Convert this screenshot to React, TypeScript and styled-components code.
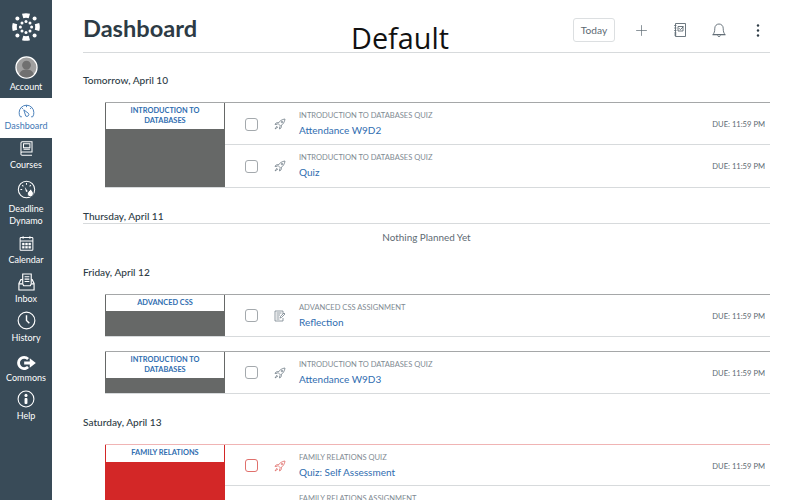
import React from 'react';
import styled, { createGlobalStyle } from 'styled-components';
import { Plus } from 'lucide-react';

const Global = createGlobalStyle`
  html, body {
    margin: 0;
    height: 500px;
    overflow: hidden;
    background: #fff;
    font-family: Lato, "Open Sans", sans-serif;
  }
`;

const Page = styled.div`
  display: flex;
  width: 800px;
  height: 500px;
  overflow: hidden;
  position: relative;
`;

const Nav = styled.nav`
  flex: 0 0 52px;
  width: 52px;
  height: 500px;
  background: #394b58;
  display: flex;
  flex-direction: column;
  align-items: center;
`;

const Logo = styled.div`
  height: 54px;
  display: flex;
  align-items: center;
  justify-content: center;
`;

const NavItem = styled.div<{ $active?: boolean; $height: number; $pad?: number; $gap?: number }>`
  width: 52px;
  height: ${(p) => p.$height}px;
  display: flex;
  flex-direction: column;
  align-items: center;
  justify-content: flex-end;
  padding-bottom: ${(p) => p.$pad ?? 6}px;
  box-sizing: border-box;
  background: ${(p) => (p.$active ? '#fff' : 'transparent')};
  color: ${(p) => (p.$active ? '#3f78b5' : '#fff')};
  font-size: 9px;
  line-height: 12px;
  text-align: center;
  svg { display: block; margin-bottom: ${(p) => p.$gap ?? 2}px; }
`;

const Main = styled.main`
  flex: 1;
  padding: 0 30px 0 31px;
  min-width: 0;
`;

const Header = styled.header`
  height: 52px;
  border-bottom: 1px solid #d7dadc;
  display: flex;
  align-items: center;
  justify-content: space-between;
`;

const Title = styled.h1`
  margin: 4px 0 0;
  font-size: 23.6px;
  font-weight: 700;
  color: #2d3b45;
`;

const Tools = styled.div`
  display: flex;
  align-items: center;
  margin-top: 8px;
  color: #5d6a73;
`;

const TodayButton = styled.div`
  width: 40px;
  height: 22px;
  border: 1px solid #dcdfe1;
  border-radius: 3px;
  font-size: 10.2px;
  line-height: 22px;
  text-align: center;
  color: #5d6a73;
  margin-right: 17px;
`;

const ToolIcon = styled.div<{ $dark?: boolean }>`
  width: 18px;
  display: flex;
  justify-content: center;
  margin-right: 21px;
  color: ${(p) => (p.$dark ? '#2d3b45' : 'inherit')};
  &:last-child { margin-right: 3px; }
`;

const Watermark = styled.div`
  position: absolute;
  left: 351px;
  top: 17px;
  font-family: "Open Sans", sans-serif;
  font-size: 28.8px;
  line-height: 42px;
  color: #111;
`;

const DayTitle = styled.h2<{ $top: number; $bordered?: boolean }>`
  margin: ${(p) => p.$top}px 0 0;
  font-size: 10.1px;
  font-weight: 500;
  line-height: 14px;
  color: #2d3b45;
  ${(p) => (p.$bordered ? 'border-bottom: 1px solid #d7dadc;' : '')}
`;

const Nothing = styled.div`
  text-align: center;
  font-size: 9.9px;
  line-height: 14px;
  margin-top: 6px;
  color: #5d6a73;
`;

const Group = styled.section<{ $top: number; $accent?: string }>`
  margin: ${(p) => p.$top}px 0 0 22px;
  display: flex;
  border-top: 1px solid ${(p) => p.$accent || '#a5a7a8'};
  border-bottom: 1px solid #d7dadc;
`;

const Course = styled.div<{ $color: string }>`
  flex: 0 0 118px;
  display: flex;
  flex-direction: column;
  border-left: 1px solid ${(p) => p.$color};
  border-right: 1px solid ${(p) => p.$color};
  border-bottom: 1px solid ${(p) => p.$color};
  background: ${(p) => p.$color};
`;

const CourseName = styled.div<{ $height: number; $color: string }>`
  height: ${(p) => p.$height}px;
  box-sizing: border-box;
  padding: 3px 18px 0;
  background: #fff;
  border-bottom: 1px solid ${(p) => p.$color};
  color: #2f6db0;
  font-size: 7.4px;
  font-weight: 700;
  line-height: 9.5px;
  text-align: center;
  text-transform: uppercase;
`;

const Rows = styled.div`
  flex: 1;
  min-width: 0;
`;

const Row = styled.div<{ $height: number }>`
  height: ${(p) => p.$height}px;
  display: flex;
  align-items: center;
  padding: 0 5px 0 20px;
  box-sizing: border-box;
  & + & { box-shadow: 0 -1px 0 #d7dadc; }
`;

const Check = styled.div<{ $accent?: string }>`
  width: 11px;
  height: 11px;
  border: 1px solid ${(p) => p.$accent || '#a4a9ad'};
  border-radius: 3px;
  margin-right: 16px;
  flex: none;
`;

const TypeIcon = styled.div<{ $color?: string }>`
  width: 12px;
  height: 12px;
  margin-right: 13px;
  flex: none;
  color: ${(p) => p.$color || '#73808a'};
  svg { display: block; }
`;

const Info = styled.div`
  flex: 1;
`;

const Kind = styled.div`
  font-size: 7.55px;
  line-height: 12px;
  color: #7f8b93;
  text-transform: uppercase;
`;

const Name = styled.div`
  font-size: 10px;
  line-height: 16px;
  color: #2f6db0;
`;

const Due = styled.div`
  font-size: 7.6px;
  color: #5d6a73;
`;

function CanvasLogo() {
  return (
    <svg width="28" height="28" viewBox="0 0 28 28" fill="#fff">
      <path d="M10 .8a13.5 13.5 0 0 1 8 0l-1.300 4.400a9 9 0 0 0-5.400 0z" />
      <path d="M10 27.200a13.5 13.5 0 0 0 8 0l-1.300-4.400a9 9 0 0 1-5.400 0z" />
      <path d="M.8 10a13.5 13.5 0 0 0 0 8l4.400-1.300a9 9 0 0 1 0-5.400z" />
      <path d="M27.200 10a13.5 13.5 0 0 1 0 8l-4.400-1.300a9 9 0 0 0 0-5.400z" />
      <circle cx="14" cy="8.4" r="1.5" />
      <circle cx="14" cy="19.6" r="1.5" />
      <circle cx="8.4" cy="14" r="1.5" />
      <circle cx="19.6" cy="14" r="1.5" />
      <circle cx="10" cy="10" r="1.5" />
      <circle cx="18" cy="10" r="1.5" />
      <circle cx="10" cy="18" r="1.5" />
      <circle cx="18" cy="18" r="1.5" />
      <circle cx="5.4" cy="5.4" r="2" />
      <circle cx="22.6" cy="5.4" r="2" />
      <circle cx="5.4" cy="22.6" r="2" />
      <circle cx="22.6" cy="22.6" r="2" />
    </svg>
  );
}

function AccountIcon() {
  return (
    <svg width="23" height="23" viewBox="0 0 24 24">
      <circle cx="12" cy="12" r="11" fill="#a0a0a0" stroke="#fff" strokeWidth="1.3" />
      <circle cx="12" cy="9.5" r="4.6" fill="#707070" />
      <path d="M4.5 19c1.5-4 4.5-4.800 7.5-4.800s6 .8 7.5 4.800a10 10 0 0 1-15 0z" fill="#707070" />
    </svg>
  );
}

const stroke = { fill: 'none', stroke: 'currentColor', strokeWidth: 1.2 };

function DashboardIcon() {
  return (
    <svg width="17" height="14" viewBox="0 0 22 18" {...stroke}>
      <path d="M5 16.5H3A9.5 9.5 0 0 1 1.5 11a9.5 9.5 0 0 1 19 0 9.5 9.5 0 0 1-1.500 5.500h-2" />
      <path d="M11 1.5v2.500M4.5 4.5 6.300 6.300M17.5 4.5 15.700 6.300" />
      <path d="M7.5 7.5 13.5 12a2.500 2.500 0 0 1-3.500 3.500z" />
    </svg>
  );
}

function CoursesIcon() {
  return (
    <svg width="17" height="17" viewBox="0 0 20 20" {...stroke}>
      <path d="M3.5 16V3.5A1.5 1.5 0 0 1 5 2h11.500v12H5a1.500 1.500 0 0 0-1.500 2A1.500 1.500 0 0 0 5 18h11.500" />
      <path d="M6.5 4.5h7.500v4.500H6.500zM6.500 11h7.500" />
    </svg>
  );
}

function DynamoIcon() {
  return (
    <svg width="19" height="19" viewBox="0 0 22 22">
      <circle cx="11" cy="11" r="9.5" {...stroke} />
      <path d="M11 3.5v2M4 11h2M6 6l1.400 1.400M16 6l-1.400 1.400" {...stroke} />
      <path d="M9 8l3.500 5-2 1z" fill="#fff" />
      <path d="M16 10c.5 2 3 3.200 3 6a3.500 3.500 0 0 1-7 0c0-2.600 3-3.600 4-6z" fill="#fff" stroke="#394b58" />
    </svg>
  );
}

function CalendarIcon() {
  return (
    <svg width="17" height="17" viewBox="0 0 20 20" {...stroke}>
      <rect x="2.5" y="3" width="15" height="15" rx="1" />
      <path d="M2.5 7h15M6 1.5v3M14 1.5v3" />
      <path d="M5 9.5h2.400v2.400H5zM8.800 9.500h2.400v2.400H8.800zM12.600 9.500H15v2.400h-2.400zM5 13.200h2.400v2.400H5zM8.800 13.200h2.400v2.400H8.800zM12.600 13.200H15v2.400h-2.400z" fill="currentColor" strokeWidth="0.4" />
    </svg>
  );
}

function InboxIcon() {
  return (
    <svg width="19" height="18" viewBox="0 0 20 19" {...stroke}>
      <path d="M6 11V1h9v10" />
      <path d="M8 4h5M8 6.5h5M8 9h5" />
      <path d="M6 7H4L2 11v7h16v-7l-2-4h-1" />
      <path d="M2 11.5h4l1 2h7l1-2h3" />
    </svg>
  );
}

function HistoryIcon() {
  return (
    <svg width="19" height="19" viewBox="0 0 20 20" {...stroke}>
      <circle cx="10" cy="10" r="8.8" />
      <path d="M10 4.5V10l3 3" strokeWidth="1.5" />
    </svg>
  );
}

function CommonsIcon() {
  return (
    <svg width="19" height="14" viewBox="0 0 20 15">
      <path d="M7.5 0a7.5 7.5 0 1 0 5.200 12.900l-2-2.100A4.500 4.500 0 0 1 7.500 12a4.500 4.500 0 0 1 0-9c1.200 0 2.300.5 3.200 1.200l2-2.100A7.500 7.500 0 0 0 7.500 0z" fill="#fff" />
      <path d="M7.5 6h6V2.500L20 7.500l-6.500 5V9h-6z" fill="#fff" />
    </svg>
  );
}

function HelpIcon() {
  return (
    <svg width="18" height="18" viewBox="0 0 20 20">
      <circle cx="10" cy="10" r="8.8" {...stroke} />
      <circle cx="10" cy="6" r="1.7" fill="#fff" />
      <rect x="8.4" y="9" width="3.2" height="6.5" rx="1" fill="#fff" />
    </svg>
  );
}

function Rocket() {
  return (
    <svg width="12" height="12" viewBox="0 0 12 12" fill="none" stroke="currentColor" strokeWidth="0.8">
      <path d="M4 5.5C5.5 3 8 1.300 11 1c-.3 3-2 5.500-4.500 7L4 5.500z" />
      <circle cx="8" cy="4" r="0.8" />
      <path d="M4.5 4.5 2 5 1 6.500l2.500-.2M7.500 7.500 7 10l-1.500 1 .2-2.500M3 8 1 11l3-2" />
    </svg>
  );
}

function AssignmentIcon() {
  return (
    <svg width="12" height="12" viewBox="0 0 12 12" fill="none" stroke="currentColor" strokeWidth="0.8">
      <path d="M9 4V1H1v10h8V8" />
      <path d="M2.5 3h5M2.5 5h3.500M2.500 7h2.500M2.500 9h3" />
      <path d="M6 8l.4-1.500L10 3l1 1-3.500 3.500z" />
    </svg>
  );
}

function PlannerIcon() {
  return (
    <svg width="12" height="14" viewBox="0 0 12 14" fill="none" stroke="currentColor" strokeWidth="0.9">
      <path d="M1.5.5h10v13h-10z" />
      <path d="M0 2.500h2.500M0 5h2.500M0 7.500h2.500M0 10h2.500M0 12h2.500" strokeWidth="0.7" />
      <path d="M4 3.500h5V8H4z" />
      <path d="M5 5.200l1.400 1.400L9.500 3.500" />
    </svg>
  );
}

function BellIcon() {
  return (
    <svg width="14" height="15" viewBox="0 0 14 15" fill="none" stroke="currentColor" strokeWidth="0.9">
      <path d="M7 1a4.200 4.200 0 0 0-4.200 4.200c0 3.300-.6 4.800-1.800 6.300h12c-1.200-1.500-1.800-3-1.800-6.300A4.200 4.200 0 0 0 7 1z" />
      <path d="M.5 11.800h13" />
      <path d="M5.500 12.500a1.600 1.600 0 0 0 3 0" />
    </svg>
  );
}

function DotsIcon() {
  return (
    <svg width="4" height="13" viewBox="0 0 4 13" fill="currentColor">
      <circle cx="2" cy="1.5" r="1.2" />
      <circle cx="2" cy="6.5" r="1.2" />
      <circle cx="2" cy="11.5" r="1.2" />
    </svg>
  );
}

interface Item { kind: string; name: string; icon: 'quiz' | 'assignment' }

function Plan(props: { top: number; course: string; color: string; head: number; items: Item[]; accent?: string; tint?: string; rowHeight?: number }) {
  return (
    <Group $top={props.top} $accent={props.accent}>
      <Course $color={props.color}>
        <CourseName $height={props.head} $color={props.color}>{props.course}</CourseName>
      </Course>
      <Rows>
        {props.items.map((item) => (
          <Row key={item.name} $height={props.rowHeight || 42}>
            <Check $accent={props.tint} />
            <TypeIcon $color={props.tint}>{item.icon === 'quiz' ? <Rocket /> : <AssignmentIcon />}</TypeIcon>
            <Info>
              <Kind>{item.kind}</Kind>
              <Name>{item.name}</Name>
            </Info>
            <Due>DUE: 11:59 PM</Due>
          </Row>
        ))}
      </Rows>
    </Group>
  );
}

const DB = 'Introduction to Databases';
const GREY = '#666867';
const RED = '#d32727';

export default function App() {
  return (
    <Page>
      <Global />
      <Nav>
        <Logo><CanvasLogo /></Logo>
        <NavItem $height={44} $pad={5}><AccountIcon />Account</NavItem>
        <NavItem $height={40} $active><DashboardIcon />Dashboard</NavItem>
        <NavItem $height={39}><CoursesIcon />Courses</NavItem>
        <NavItem $height={56} $gap={4}><DynamoIcon />Deadline Dynamo</NavItem>
        <NavItem $height={39}><CalendarIcon />Calendar</NavItem>
        <NavItem $height={39}><InboxIcon />Inbox</NavItem>
        <NavItem $height={39}><HistoryIcon />History</NavItem>
        <NavItem $height={40}><CommonsIcon />Commons</NavItem>
        <NavItem $height={38}><HelpIcon />Help</NavItem>
      </Nav>
      <Main>
        <Header>
          <Title>Dashboard</Title>
          <Tools>
            <TodayButton>Today</TodayButton>
            <ToolIcon><Plus size={17} strokeWidth={1} /></ToolIcon>
            <ToolIcon><PlannerIcon /></ToolIcon>
            <ToolIcon><BellIcon /></ToolIcon>
            <ToolIcon $dark><DotsIcon /></ToolIcon>
          </Tools>
        </Header>
        <DayTitle $top={20}>Tomorrow, April 10</DayTitle>
        <Plan top={15} course={DB} color={GREY} head={27} items={[
          { kind: 'Introduction to Databases Quiz', name: 'Attendance W9D2', icon: 'quiz' },
          { kind: 'Introduction to Databases Quiz', name: 'Quiz', icon: 'quiz' },
        ]} />
        <DayTitle $top={21} $bordered>Thursday, April 11</DayTitle>
        <Nothing>Nothing Planned Yet</Nothing>
        <DayTitle $top={21}>Friday, April 12</DayTitle>
        <Plan top={15} course="Advanced CSS" color={GREY} head={17} rowHeight={41} items={[
          { kind: 'Advanced CSS Assignment', name: 'Reflection', icon: 'assignment' },
        ]} />
        <Plan top={14} course={DB} color={GREY} head={27} rowHeight={41} items={[
          { kind: 'Introduction to Databases Quiz', name: 'Attendance W9D3', icon: 'quiz' },
        ]} />
        <DayTitle $top={21}>Saturday, April 13</DayTitle>
        <Plan top={15} course="Family Relations" color={RED} head={18} accent="#f0b4b4" tint="#e0706c" rowHeight={41} items={[
          { kind: 'Family Relations Quiz', name: 'Quiz: Self Assessment', icon: 'quiz' },
          { kind: 'Family Relations Assignment', name: 'Reflection', icon: 'assignment' },
        ]} />
      </Main>
      <Watermark>Default</Watermark>
    </Page>
  );
}
